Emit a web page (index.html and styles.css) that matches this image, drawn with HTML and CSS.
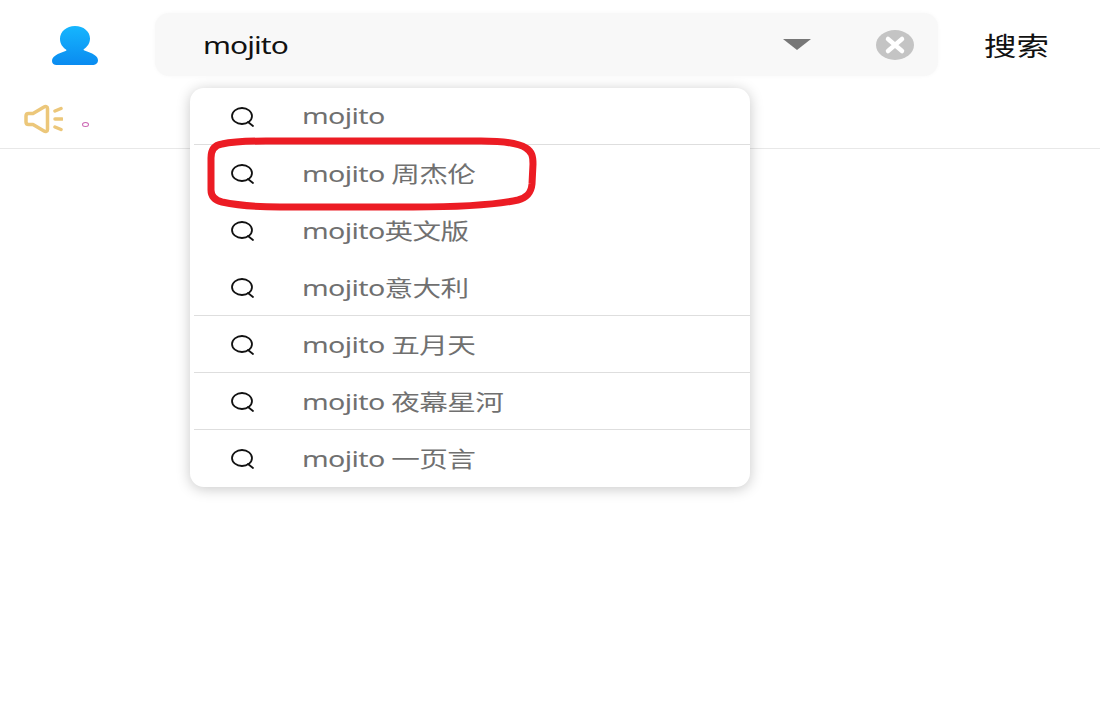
FILE: index.html
```html
<!DOCTYPE html>
<html lang="zh-CN">
<head>
<meta charset="UTF-8">
<meta name="viewport" content="width=device-width, initial-scale=1.0">
<title>搜索</title>
<link rel="stylesheet" href="styles.css">
</head>
<body>

<div class="page">
  <div class="top-bar">
    <div class="avatar">
      <svg width="46" height="39" viewBox="0 0 46 39">
        <defs>
          <linearGradient id="userFill" x1="0" y1="0" x2="0" y2="1">
            <stop offset="0" stop-color="#16b6fe"/>
            <stop offset="1" stop-color="#0a8bf0"/>
          </linearGradient>
        </defs>
        <path fill="url(#userFill)" d="M23 0c8.500 0 15 5.500 15 12.500 0 5-3 8.500-6 10.500-.8.600-.5 1.200.5 1.600 3.500 1.300 7 2.500 10 4.400 2.500 1.600 3.500 3.500 3.500 5.500 0 2.500-2 4-4.500 4.500H4.500C2 39 0 37.500 0 35c0-2 1-3.900 3.500-5.500 3-1.900 6.500-3.100 10-4.400 1-.4 1.300-1 .5-1.600-3-2-6-5.500-6-10.500C8 5.500 14.500 0 23 0z"/>
      </svg>
    </div>
    <div class="search-box">
      <span class="search-value"><span class="wide">mojito</span></span>
      <span class="arrow"></span>
      <svg class="clear-icon" width="38" height="30" viewBox="0 0 38 30">
        <ellipse cx="19" cy="15" rx="19" ry="15" fill="#c4c4c4"/>
        <path d="M12 9l14 12M26 9L12 21" stroke="#fff" stroke-width="4.500" stroke-linecap="round"/>
      </svg>
    </div>
    <div class="search-btn"><span class="wide">搜索</span></div>
  </div>

  <div class="notice">
    <svg width="40" height="30" viewBox="0 0 40 30" fill="none" stroke="#ecc77a" stroke-width="3.500" stroke-linecap="round" stroke-linejoin="round">
      <path d="M3 12c0-1.500 1-2.500 2.500-2.500H10L21 3c1.500-1 3.500-.5 3.500 1.500v21c0 2-2 2.500-3.500 1.500L10 20.500H5.500C4 20.500 3 19.500 3 18z"/>
      <path d="M32 7l6-2.500M32 15h7M32 23l6 2.500"/>
    </svg>
    <span class="notice-dot"></span>
  </div>

  <div class="suggest">
    <div class="suggest-item">
      <svg class="q-icon" width="26" height="22" viewBox="0 0 26 22"><use href="#mag"/></svg>
      <span class="wide">mojito</span>
    </div>
    <div class="suggest-item no-line">
      <svg class="q-icon" width="26" height="22" viewBox="0 0 26 22"><use href="#mag"/></svg>
      <span class="wide">mojito 周杰伦</span>
    </div>
    <div class="suggest-item no-line">
      <svg class="q-icon" width="26" height="22" viewBox="0 0 26 22"><use href="#mag"/></svg>
      <span class="wide">mojito英文版</span>
    </div>
    <div class="suggest-item">
      <svg class="q-icon" width="26" height="22" viewBox="0 0 26 22"><use href="#mag"/></svg>
      <span class="wide">mojito意大利</span>
    </div>
    <div class="suggest-item">
      <svg class="q-icon" width="26" height="22" viewBox="0 0 26 22"><use href="#mag"/></svg>
      <span class="wide">mojito 五月天</span>
    </div>
    <div class="suggest-item">
      <svg class="q-icon" width="26" height="22" viewBox="0 0 26 22"><use href="#mag"/></svg>
      <span class="wide">mojito 夜幕星河</span>
    </div>
    <div class="suggest-item no-line">
      <svg class="q-icon" width="26" height="22" viewBox="0 0 26 22"><use href="#mag"/></svg>
      <span class="wide">mojito 一页言</span>
    </div>
  </div>

  <svg class="red-mark" width="332" height="76" viewBox="0 0 332 76" fill="none">
    <path d="M5 22C5 13 9 9 16 8 30 5 45 5 60 5H275c20 0 37 2 45 7 6 4 7 8 7 16l-1 20c-1 10-6 14-14 16-27 6-67 7-105 7H74c-24 0-44-2-58-5-8-2-11-6-11-12z" stroke="#ec1c24" stroke-width="7"/>
  </svg>
</div>

<svg class="sprites" width="0" height="0">
  <symbol id="mag" viewBox="0 0 26 22">
    <ellipse cx="12" cy="10" rx="10" ry="8" fill="none" stroke="#111" stroke-width="1.800"/>
    <path d="M18 16l5 4" stroke="#111" stroke-width="1.800" stroke-linecap="round"/>
  </symbol>
</svg>

</body>
</html>
```

FILE: styles.css
```css
body {
  margin: 0;
  background-color: #fff;
  font-family: "Noto Sans", "Noto Sans CJK SC", sans-serif;
}
.page {
  position: relative;
  width: 1100px;
  height: 704px;
  overflow: hidden;
}
/* the whole picture is a bit stretched sideways */
.wide {
  display: inline-block;
  transform: scaleX(1.3);
  transform-origin: left center;
  letter-spacing: -0.5px;
  white-space: nowrap;
}
.top-bar {
  display: flex;
  align-items: center;
  height: 90px;
}
.avatar {
  display: flex;
  justify-content: center;
  width: 150px;
  margin-right: 5px;
}
.search-box {
  display: flex;
  align-items: center;
  box-sizing: border-box;
  width: 783px;
  height: 63px;
  margin-top: -1px;
  padding-left: 48px;
  padding-right: 24px;
  border-radius: 14px;
  background-color: #f8f8f8;
  box-shadow: 0 0 4px #f8f8f8;
}
.search-value {
  flex: 1;
  font-size: 23px;
  color: #111;
}
.search-value .wide {
  letter-spacing: -0.7px;
}
.arrow {
  width: 0;
  height: 0;
  margin-right: 65px;
  border-left: 14px solid transparent;
  border-right: 14px solid transparent;
  border-top: 11px solid #777;
}
.search-btn {
  flex: 1;
  padding-left: 46px;
  font-size: 26px;
  color: #111;
}
.search-btn .wide {
  transform: scaleX(1.25);
  letter-spacing: 0;
}
.notice {
  display: flex;
  align-items: center;
  box-sizing: border-box;
  height: 59px;
  padding-left: 23px;
  border-bottom: 1px solid #e8e8e8;
}
.notice-dot {
  width: 5px;
  height: 3px;
  margin-left: 19px;
  margin-top: 11px;
  border: 1.500px solid #cc66b4;
  border-radius: 50%;
}
.suggest {
  position: absolute;
  left: 190px;
  top: 88px;
  width: 560px;
  border-radius: 14px;
  background-color: #fff;
  box-shadow: 0 2px 14px rgba(0, 0, 0, 0.22);
}
.suggest-item {
  display: flex;
  align-items: center;
  box-sizing: border-box;
  height: 57px;
  margin-left: 4px;
  padding-left: 36px;
  border-bottom: 1px solid #dedede;
  font-size: 22px;
  color: #707070;
}
.suggest-item .wide {
  margin-bottom: 2px;
}
.no-line {
  border-bottom-color: transparent;
}
.q-icon {
  margin-top: 2px;
  margin-right: 46px;
}
.red-mark {
  position: absolute;
  left: 206px;
  top: 136px;
}
.sprites {
  position: absolute;
}
```
